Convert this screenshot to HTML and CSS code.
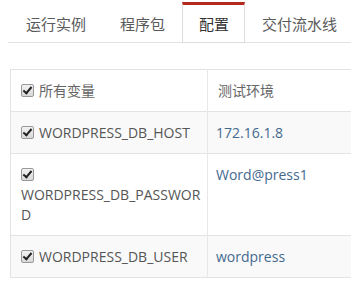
FILE: index.html
```html
<!DOCTYPE html>
<html lang="zh-CN">
<head>
    <meta charset="UTF-8">
    <title>配置</title>
    <link rel="stylesheet" href="styles.css">
</head>
<body>
    <ul class="tabs">
        <li class="tab">运行实例</li>
        <li class="tab">程序包</li>
        <li class="tab active">配置</li>
        <li class="tab">交付流水线</li>
    </ul>

    <table class="vars">
        <thead>
            <tr>
                <th class="name-col"><span class="check"></span>所有变量</th>
                <th class="env-col">测试环境</th>
            </tr>
        </thead>
        <tbody>
            <tr>
                <td><span class="check"></span>WORDPRESS_DB_HOST</td>
                <td class="value">172.16.1.8</td>
            </tr>
            <tr>
                <td><span class="check"></span>WORDPRESS_DB_PASSWORD</td>
                <td class="value">Word@press1</td>
            </tr>
            <tr>
                <td><span class="check"></span>WORDPRESS_DB_USER</td>
                <td class="value">wordpress</td>
            </tr>
        </tbody>
    </table>
</body>
</html>
```

FILE: styles.css
```css
body {
    margin: 0;
    font-family: 'Open Sans', 'Noto Sans CJK SC', sans-serif;
    color: #555;
    background: #fff;
    overflow: hidden;
}

.tabs {
    list-style: none;
    margin: 0 0 0 8px;
    padding: 2px 0 0 1px;
    display: flex;
    border-bottom: 1px solid #e3e3e3;
    width: 400px;
}

.tab {
    font-size: 15px;
    line-height: 20px;
    padding: 12px 16px 8px;
    margin-bottom: -1px;
    color: #5a5a5a;
    border: 1px solid transparent;
    border-top: 0;
    white-space: nowrap;
}

.tab.active {
    padding: 9px 15px 8px 16px;
    border-color: #ddd;
    border-top: 3px solid #b5281f;
    background: #fff;
    color: #333;
}

.vars {
    margin: 26px 0 0 10px;
    border-collapse: collapse;
    border: 1px solid #e3e3e3;
    font-size: 14px;
    line-height: 20px;
    width: 400px;
    table-layout: fixed;
}

.vars th,
.vars td {
    text-align: left;
    font-weight: normal;
    vertical-align: top;
    padding: 11px 4px 10px 10px;
    border-top: 1px solid #e3e3e3;
    word-wrap: break-word;
}

.vars th {
    color: #666;
}

.name-col {
    width: 182px;
    border-right: 1px solid #e8e8e8;
}

.vars td:first-child {
    border-right: 1px solid #e8e8e8;
}

.vars tbody tr:nth-child(odd) {
    background: #f9f9f9;
}

.vars .value {
    color: #44698f;
    padding-left: 8px;
}

.check {
    display: inline-block;
    width: 11px;
    height: 11px;
    margin: 0 5px -1px 0;
    border: 1px solid #999;
    border-radius: 2px;
    background: linear-gradient(#f2f2f2, #d8d8d8);
    position: relative;
}

.check::after {
    content: '';
    position: absolute;
    left: 3px;
    top: 0px;
    width: 3px;
    height: 7px;
    border: solid #222;
    border-width: 0 2.5px 2.5px 0;
    transform: rotate(40deg);
}
```
